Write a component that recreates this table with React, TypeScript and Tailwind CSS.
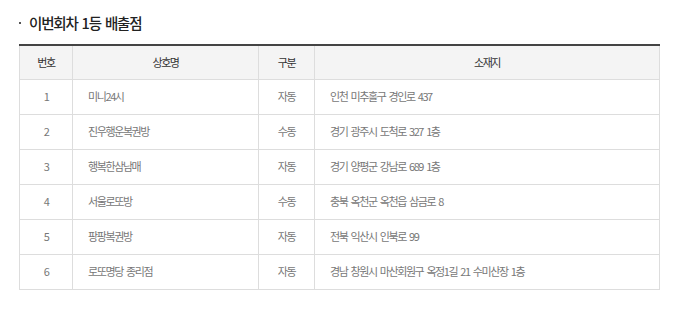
const rows = [
  { no: 1, name: "미니24시", type: "자동", addr: "인천 미추홀구 경인로 437" },
  { no: 2, name: "진우행운복권방", type: "수동", addr: "경기 광주시 도척로 327 1층" },
  { no: 3, name: "행복한삼남매", type: "자동", addr: "경기 양평군 강남로 689 1층" },
  { no: 4, name: "서울로또방", type: "수동", addr: "충북 옥천군 옥천읍 삼금로 8" },
  { no: 5, name: "팡팡복권방", type: "자동", addr: "전북 익산시 인북로 99" },
  { no: 6, name: "로또명당 종리점", type: "자동", addr: "경남 창원시 마산회원구 옥정1길 21 수미산장 1층" },
];

export default function App() {
  return (
    <div
      className="w-[683px] h-[310px] bg-white pt-[12px] pl-[19px]"
      style={{ fontFamily: '"Noto Sans CJK KR", "Noto Sans", sans-serif' }}
    >
      <h2 className="flex items-center h-[22px] text-[14.5px] font-medium text-[#222] tracking-[-1.2px] [word-spacing:2px]">
        <span className="w-[2px] h-[2px] bg-[#555] mr-[8px]" />
        이번회차 1등 배출점
      </h2>

      <table className="mt-[10px] w-[641px] border-collapse border-t-2 border-t-[#444] text-[11px] tracking-[-1.4px] [word-spacing:2px] table-fixed">
        <colgroup>
          <col className="w-[53px]" />
          <col className="w-[186px]" />
          <col className="w-[56px]" />
          <col />
        </colgroup>
        <thead>
          <tr className="h-[34px] bg-[#f4f4f4] text-[#333]">
            <th className="font-normal border border-[#ddd] border-t-0">번호</th>
            <th className="font-normal border border-[#ddd] border-t-0">상호명</th>
            <th className="font-normal border border-[#ddd] border-t-0">구분</th>
            <th className="font-normal border border-[#ddd] border-t-0">소재지</th>
          </tr>
        </thead>
        <tbody className="text-[#777]">
          {rows.map((r) => (
            <tr key={r.no} className="h-[35px]">
              <td className="border border-[#ddd] text-center">{r.no}</td>
              <td className="border border-[#ddd] pl-[15px]">{r.name}</td>
              <td className="border border-[#ddd] text-center">{r.type}</td>
              <td className="border border-[#ddd] pl-[15px]">{r.addr}</td>
            </tr>
          ))}
        </tbody>
      </table>
    </div>
  );
}
